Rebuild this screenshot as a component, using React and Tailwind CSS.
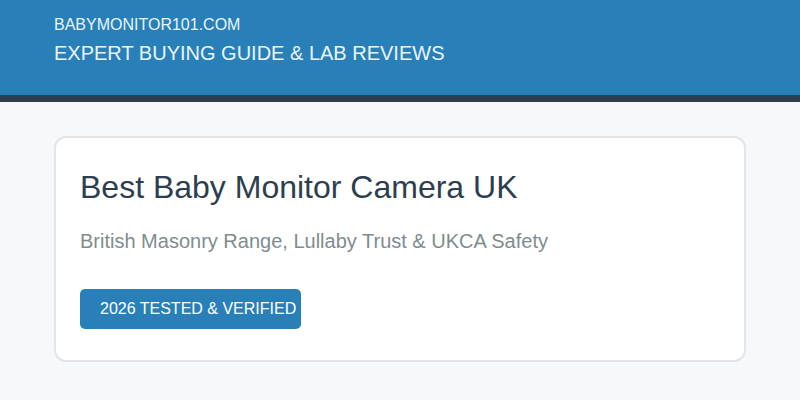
import React from 'react';

const App = () => {
  return (
    <div className="min-h-[400px] bg-[#f7f8fa] font-['Liberation_Sans',Arial,sans-serif]">
      <header className="bg-[#2980b9] border-b-[7px] border-[#2c3e50]">
        <div className="pl-[54px] pt-[15px] h-[95px]">
          <div className="text-[16px] leading-[20px] text-[#eaf4fb]">BABYMONITOR101.COM</div>
          <div className="mt-[6px] text-[20px] leading-[24px] text-[#eaf4fb]">EXPERT BUYING GUIDE &amp; LAB REVIEWS</div>
        </div>
      </header>

      <main className="px-[54px] pt-[34px]">
        <div className="h-[226px] bg-white border-2 border-[#e1e5e8] rounded-[12px] pl-[24px] pt-[29px]">
          <h1 className="text-[32px] leading-[40px] text-[#2c3e50]">Best Baby Monitor Camera UK</h1>
          <p className="mt-[22px] text-[20px] leading-[24px] text-[#7f8c8d]">
            British Masonry Range, Lullaby Trust &amp; UKCA Safety
          </p>
          <div className="mt-[36px] w-[221px] h-[40px] rounded-[5px] bg-[#2980b9] pl-[20px] flex items-center text-[16px] text-white whitespace-nowrap">
            2026 TESTED &amp; VERIFIED
          </div>
        </div>
      </main>
    </div>
  );
};

export default App;
